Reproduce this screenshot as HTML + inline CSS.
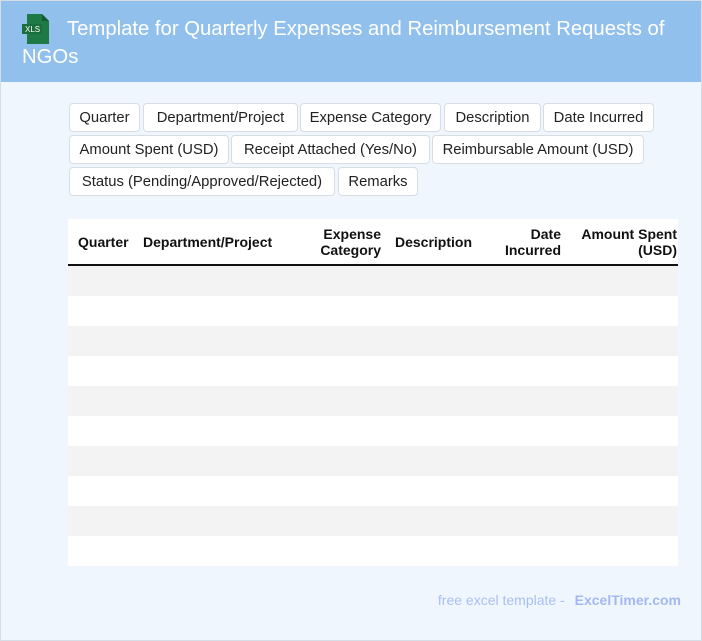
<!DOCTYPE html>
<html><head><meta charset="utf-8"><style>
*{margin:0;padding:0;box-sizing:border-box}
html,body{width:702px;height:641px;overflow:hidden}
body{background:#f0f6fe;font-family:"Liberation Sans",Arial,sans-serif;position:relative}
.bd{position:absolute;left:0;top:0;width:702px;height:641px;border:1px solid #d5dde6}
.hd{position:absolute;left:1px;top:1px;width:700px;height:81px;background:#92c0ec}
.title{position:absolute;left:21px;top:14px;width:670px;color:#fff;font-size:20.3px;line-height:28px;text-indent:45px}
.ico{position:absolute;left:21px;top:13px}
.tag{position:absolute;height:29px;border:1px solid #d7dde3;border-radius:4px;background:#fff;font-size:14.8px;line-height:29px;text-align:center;color:#222;white-space:nowrap}
.tbl{position:absolute;left:68px;top:219px;width:610px;height:347px;background:#fff}
.th{position:absolute;font-weight:bold;font-size:14px;line-height:16px;color:#111}
.line{position:absolute;left:0;top:45px;width:610px;height:2px;background:#111}
.row{position:absolute;left:0;width:610px;height:30px}
.ft{position:absolute;right:21px;top:592px;font-size:14px;color:#a9bff2}
.ft b{color:#a3b8f0;margin-left:6px}
</style></head><body>
<div class="bd"></div>
<div class="hd">
<svg class="ico" width="30" height="30" viewBox="0 0 30 30"><path d="M5 0h15l7 7v23H5z" fill="#1d7a45"/><path d="M20 0v7h7z" fill="#145a32"/><rect x="0" y="10" width="20" height="10" fill="#1a6e3d"/><text x="3" y="18" font-size="8" fill="#fff" font-family="Liberation Sans">XLS</text></svg>
<div class="title">Template for Quarterly Expenses and Reimbursement Requests of NGOs</div>
</div>
<div class="tag" style="left:69px;top:103px;width:71px">Quarter</div>
<div class="tag" style="left:143px;top:103px;width:155px">Department/Project</div>
<div class="tag" style="left:300px;top:103px;width:141px">Expense Category</div>
<div class="tag" style="left:444px;top:103px;width:97px">Description</div>
<div class="tag" style="left:543px;top:103px;width:111px">Date Incurred</div>
<div class="tag" style="left:69px;top:135px;width:160px">Amount Spent (USD)</div>
<div class="tag" style="left:231px;top:135px;width:199px">Receipt Attached (Yes/No)</div>
<div class="tag" style="left:432px;top:135px;width:212px">Reimbursable Amount (USD)</div>
<div class="tag" style="left:69px;top:167px;width:266px">Status (Pending/Approved/Rejected)</div>
<div class="tag" style="left:338px;top:167px;width:80px">Remarks</div>
<div class="tbl">
<div class="th" style="left:10px;top:15px">Quarter</div>
<div class="th" style="left:75px;top:15px">Department/Project</div>
<div class="th" style="right:297px;top:7px;text-align:right">Expense<br>Category</div>
<div class="th" style="left:327px;top:15px">Description</div>
<div class="th" style="right:117px;top:7px;text-align:right">Date<br>Incurred</div>
<div class="th" style="right:1px;top:7px;text-align:right">Amount Spent<br>(USD)</div>
<div class="line"></div>
<div class="row" style="top:47px;background:#f3f3f3"></div>
<div class="row" style="top:107px;background:#f3f3f3"></div>
<div class="row" style="top:167px;background:#f3f3f3"></div>
<div class="row" style="top:227px;background:#f3f3f3"></div>
<div class="row" style="top:287px;background:#f3f3f3"></div>
</div>
<div class="ft">free excel template - <b>ExcelTimer.com</b></div>
</body></html>
